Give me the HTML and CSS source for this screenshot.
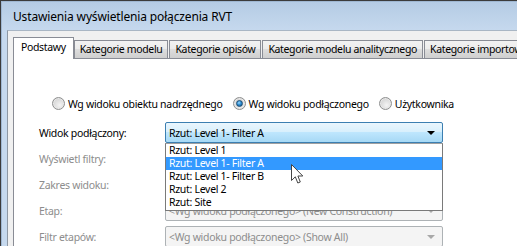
FILE: index.html
```html
<!DOCTYPE html>
<html lang="pl">
<head>
<meta charset="utf-8">
<title>Ustawienia wyświetlenia połączenia RVT</title>
<link rel="stylesheet" href="styles.css">
</head>
<body>
<div class="window">
  <div class="titlebar">Ustawienia wyświetlenia połączenia RVT</div>
  <div class="client">
    <div class="tabs">
      <div class="tab active">Podstawy</div>
      <div class="tab">Kategorie modelu</div>
      <div class="tab">Kategorie opisów</div>
      <div class="tab">Kategorie modelu analitycznego</div>
      <div class="tab">Kategorie importowanych</div>
    </div>
    <div class="panel">
      <div class="radios">
        <label class="radio"><span class="dot"></span>Wg widoku obiektu nadrzędnego</label>
        <label class="radio"><span class="dot on"></span>Wg widoku podłączonego</label>
        <label class="radio"><span class="dot"></span>Użytkownika</label>
      </div>
      <div class="form">
        <div class="row">
          <span class="label">Widok podłączony:</span>
          <div class="combo active">
            <span class="value">Rzut: Level 1- Filter A</span>
            <span class="arrow"></span>
            <ul class="list">
              <li>Rzut: Level 1</li>
              <li class="sel">Rzut: Level 1- Filter A</li>
              <li>Rzut: Level 1- Filter B</li>
              <li>Rzut: Level 2</li>
              <li>Rzut: Site</li>
            </ul>
          </div>
        </div>
        <div class="row">
          <span class="label dim">Wyświetl filtry:</span>
          <div class="combo disabled"><span class="arrow"></span></div>
        </div>
        <div class="row">
          <span class="label dim">Zakres widoku:</span>
          <div class="combo disabled"><span class="arrow"></span></div>
        </div>
        <div class="row">
          <span class="label dim">Etap:</span>
          <div class="combo disabled"><span class="value">&lt;Wg widoku podłączonego&gt; (New Construction)</span><span class="arrow"></span></div>
        </div>
        <div class="row">
          <span class="label dim">Filtr etapów:</span>
          <div class="combo disabled"><span class="value">&lt;Wg widoku podłączonego&gt; (Show All)</span><span class="arrow"></span></div>
        </div>
      </div>
    </div>
  </div>
  <svg class="cursor" width="13" height="21" viewBox="0 0 13 21">
    <path d="M0.5 0.5 L0.5 16.5 L4.3 12.8 L6.8 19 L9.3 18 L6.9 12 L11.8 12 Z" fill="#fff" stroke="#444" stroke-width="1" stroke-linejoin="miter"/>
  </svg>
</div>
</body>
</html>
```

FILE: styles.css
```css
* { box-sizing: border-box; }
html, body {
  margin: 0;
  padding: 0;
  width: 517px;
  height: 246px;
  overflow: hidden;
  background: #f0f0f0;
}
body {
  font-family: "Noto Sans", "Open Sans", sans-serif;
  font-size: 10.5px;
  letter-spacing: -0.3px;
  color: #000;
}
.window {
  position: relative;
  width: 517px;
  height: 246px;
  overflow: hidden;
  border-top: 1px solid #3b3b3b;
  border-left: 1px solid #3b3b3b;
  background: linear-gradient(#b4cbe4, #c6d9ee 30px);
  padding-left: 6px;
  box-shadow: inset 1px 1px 0 #9fb7d2;
}
.titlebar {
  height: 29px;
  padding: 8px 0 0 6px;
  line-height: 16px;
  font-size: 12px;
  color: #000;
  letter-spacing: -0.15px;
}
.client {
  background: #f0f0f0;
  border-left: 1px solid #8e98a4;
  border-top: 1px solid #a9b6c4;
  height: 240px;
  width: 540px;
  padding: 6px 0 0 5px;
}
.tabs {
  display: flex;
  align-items: flex-end;
  height: 21px;
  padding-left: 1px;
}
.tab {
  flex: none;
  height: 18px;
  padding: 0 5px;
  margin-right: 1px;
  border: 1px solid #898c95;
  border-bottom: none;
  background: linear-gradient(#f2f2f2 0%, #ebebeb 50%, #dddddd 50%, #cfcfcf 100%);
  line-height: 16px;
  white-space: nowrap;
  font-size: 10.5px;
  letter-spacing: -0.35px;
}
.tab.active {
  padding: 0 7px;
  margin-left: -1px;
  margin-right: 0;
  background: #fff;
  position: relative;
  z-index: 1;
  line-height: 18px;
  height: 22px;
  margin-bottom: -1px;
}
.panel {
  background: #fff;
  border: 1px solid #898c95;
  height: 260px;
  padding: 37px 0 0 25px;
}
.radios {
  display: flex;
  gap: 10px;
  padding-left: 13px;
  height: 15px;
  align-items: center;
}
.radio {
  display: flex;
  align-items: center;
  gap: 3px;
  white-space: nowrap;
}
.dot {
  width: 13px;
  height: 13px;
  border-radius: 50%;
  border: 1px solid #8e8f8f;
  background: radial-gradient(circle at 60% 65%, #f4f4f4 0%, #dadada 60%, #c4c4c4 100%);
  box-shadow: inset 0 0 0 1px #e8e8e8;
  position: relative;
  flex: none;
}
.dot.on::after {
  content: "";
  position: absolute;
  left: 2px;
  top: 2px;
  width: 7px;
  height: 7px;
  border-radius: 50%;
  background: radial-gradient(circle at 40% 35%, #9ddcff 0%, #2d8cd2 45%, #134f7c 100%);
  border: 1px solid #1d4d73;
  box-sizing: border-box;
}
.form {
  display: flex;
  flex-direction: column;
  gap: 5px;
  margin-top: 11px;
}
.row {
  display: flex;
  align-items: center;
  height: 21px;
}
.label {
  width: 126px;
  flex: none;
  white-space: nowrap;
}
.label.dim { color: #8d8d8d; }
.combo {
  position: relative;
  width: 278px;
  height: 21px;
  border: 1px solid #adb2b5;
  border-radius: 2px;
  background: #f4f4f4;
  display: flex;
  align-items: center;
  padding-left: 3px;
  white-space: nowrap;
}
.combo.disabled { color: #8d8d8d; }
.combo.active {
  border-color: #3c7fb1;
  background: linear-gradient(#eaf6fd 0%, #d9f0fc 45%, #bee6fd 50%, #a7d9f5 100%);
  z-index: 2;
}
.arrow {
  position: absolute;
  right: 7px;
  top: 8px;
  width: 0;
  height: 0;
  border-left: 4px solid transparent;
  border-right: 4px solid transparent;
  border-top: 4px solid #000;
}
.combo.disabled .arrow { border-top-color: #a8a8a8; }
.list {
  position: absolute;
  left: -1px;
  top: 20px;
  width: 278px;
  margin: 0;
  padding: 0;
  list-style: none;
  background: #fff;
  border: 1px solid #7a7a7a;
  border-top-color: #a0a0a0;
}
.list li {
  height: 13px;
  line-height: 13px;
  padding-left: 3px;
  color: #000;
}
.list li.sel {
  background: #3399ff;
  color: #fff;
}
.list li:last-child { height: 14px; }
.cursor {
  position: absolute;
  left: 290px;
  top: 163px;
  z-index: 5;
}
```
